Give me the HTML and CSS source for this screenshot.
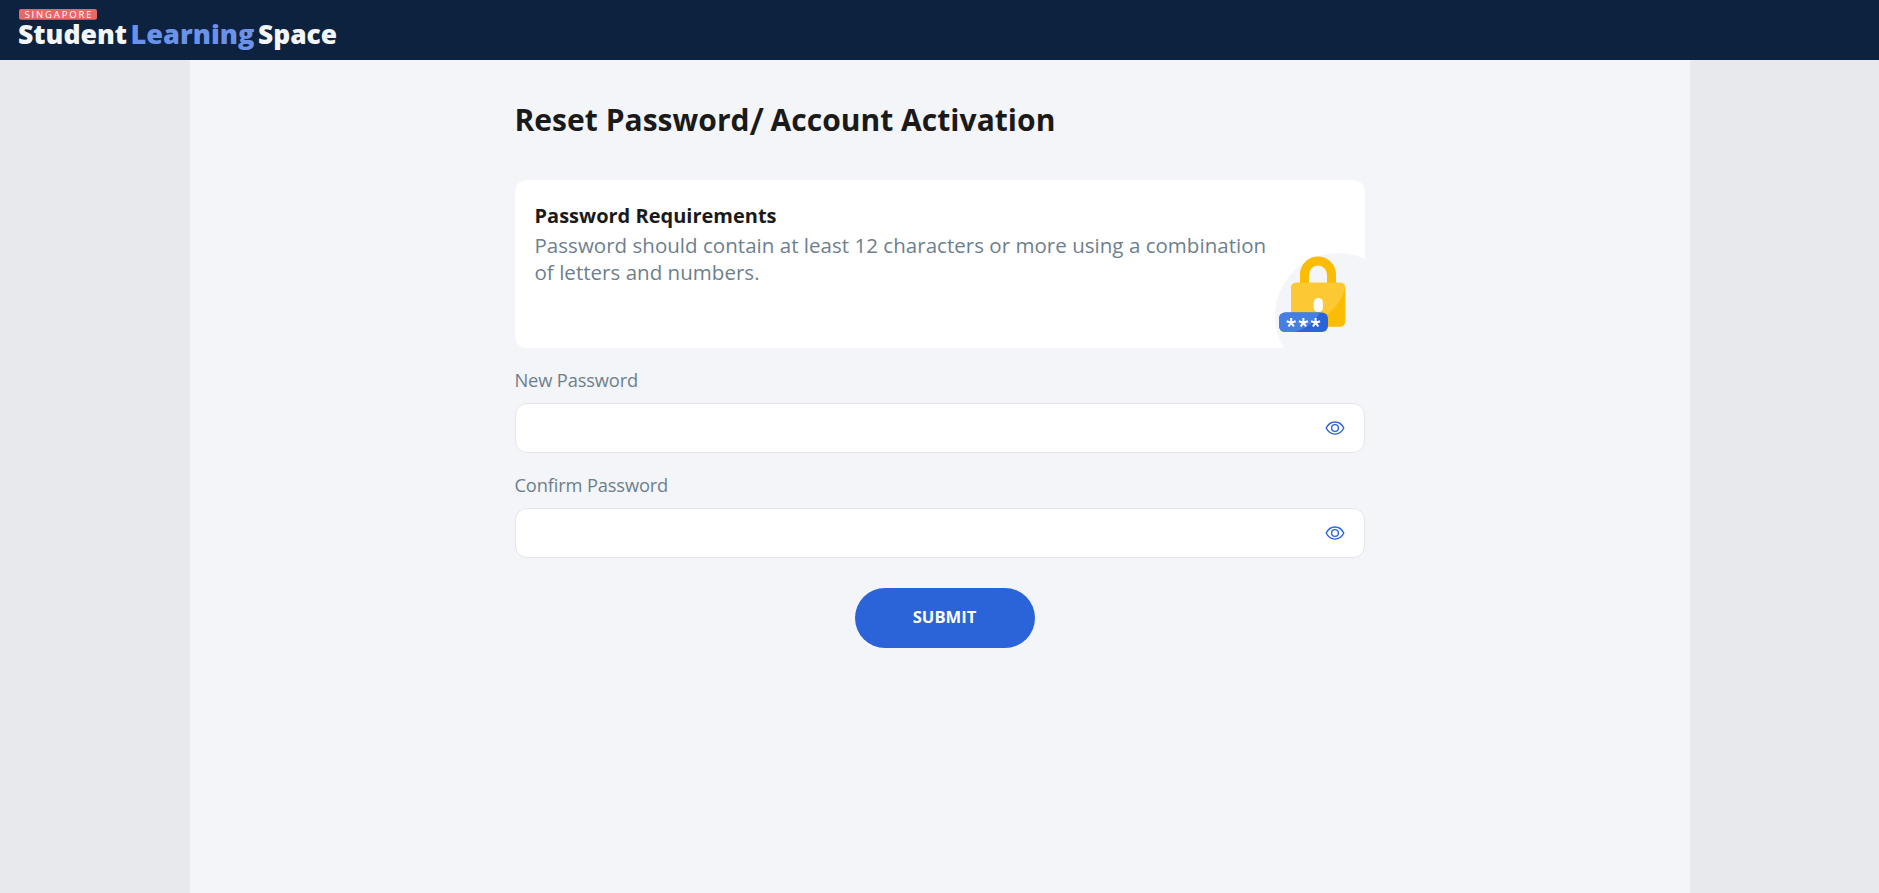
FILE: index.html
```html
<!DOCTYPE html>
<html lang="en">
<head>
<meta charset="utf-8">
<title>Reset Password</title>
<link rel="stylesheet" href="styles.css">
</head>
<body>
<header class="topbar">
  <svg class="logo" width="322" height="46" viewBox="0 0 322 46">
    <rect class="logo-tag" x="1" y="1" width="78" height="10.800" rx="2"/>
    <text class="logo-country" x="6.5" y="9.7" textLength="67">SINGAPORE</text>
    <text class="logo-word" x="0" y="35.5" textLength="109" lengthAdjust="spacingAndGlyphs">Student</text>
    <text class="logo-word logo-accent" x="112.5" y="35.5" textLength="124" lengthAdjust="spacingAndGlyphs">Learning</text>
    <text class="logo-word" x="240" y="35.5" textLength="79" lengthAdjust="spacingAndGlyphs">Space</text>
  </svg>
</header>
<main class="page">
  <form class="content">
    <h1 class="title">Reset Password<span class="slash">/</span> Account Activation</h1>
    <section class="card">
      <div class="card-text">
        <h2 class="card-title">Password Requirements</h2>
        <p class="card-body">Password should contain at least 12 characters or more using a combination of letters and numbers.</p>
      </div>
      <svg class="lock" width="90" height="98" viewBox="0 0 90 98">
        <circle class="halo" cx="63" cy="66" r="63"/>
        <path class="shackle" d="M29.500 34V24.500a13.500 13.500 0 0 1 27 0V34"/>
        <rect class="lock-dark" x="16" y="32.800" width="54.300" height="44" rx="5"/>
        <path class="lock-light" d="M21 32.800H65a5 5 0 0 1 5 4.500C67 54 52 68 32 76.800H21a5 5 0 0 1-5-5V37.800a5 5 0 0 1 5-5z"/>
        <rect class="keyhole" x="38.700" y="48" width="9.200" height="14" rx="4.600"/>
        <rect class="pin-dark" x="4" y="62.500" width="49" height="19.500" rx="6"/>
        <path class="pin-light" d="M10 62.500H45C40 72 31 79 19 82H10a6 6 0 0 1-6-6V68.500a6 6 0 0 1 6-6z"/>
        <path class="stars" d="M16.200 72.700v-4.800m0 4.800l4.500-1.400m-4.500 1.400l2.700 3.800m-2.700-3.800l-2.700 3.800m2.700-3.800l-4.500-1.400M28.400 72.700v-4.800m0 4.800l4.500-1.400m-4.500 1.400l2.700 3.800m-2.700-3.800l-2.700 3.800m2.700-3.800l-4.500-1.400M40.600 72.700v-4.800m0 4.800l4.500-1.400m-4.500 1.400l2.700 3.800m-2.700-3.800l-2.700 3.800m2.700-3.800l-4.500-1.400"/>
      </svg>
    </section>
    <div class="field">
      <label class="label" for="new">New Password</label>
      <div class="box">
        <input class="input" id="new" type="password">
        <svg class="eye" width="20" height="16" viewBox="0 0 20 16"><path d="M1.200 8C5.200 -.1 14.800 -.1 18.800 8C14.800 16.100 5.200 16.100 1.200 8z"/><circle cx="10" cy="8" r="3.400"/></svg>
      </div>
    </div>
    <div class="field">
      <label class="label" for="confirm">Confirm Password</label>
      <div class="box">
        <input class="input" id="confirm" type="password">
        <svg class="eye" width="20" height="16" viewBox="0 0 20 16"><path d="M1.200 8C5.200 -.1 14.800 -.1 18.800 8C14.800 16.100 5.200 16.100 1.200 8z"/><circle cx="10" cy="8" r="3.400"/></svg>
      </div>
    </div>
    <button class="submit" type="button">SUBMIT</button>
  </form>
</main>
</body>
</html>
```
FILE: styles.css
```css
* { box-sizing: border-box; }
body {
  margin: 0;
  min-height: 100vh;
  display: flex;
  flex-direction: column;
  background: #e7e9ed;
  font-family: "Open Sans", sans-serif;
  color: #1a1a1a;
}
.topbar { height: 60px; padding: 8px 18px; background: #0c223f; }
.logo { display: block; }
.logo-tag { fill: #e86868; }
.logo-country { fill: #fff; font-size: 9.5px; }
.logo-word { fill: #f3f5f9; font-size: 27px; font-weight: 800; }
.logo-accent { fill: #6a92e8; }
.page {
  width: 1500px;
  flex: 1;
  margin: 0 auto;
  background: #f3f5f9;
}
.content { width: 850px; margin: 0 auto; padding-top: 39px; display: flex; flex-direction: column; }
.title { height: 42px; margin: 0 0 39px; font-size: 30px; line-height: 42px; font-weight: 700; letter-spacing: .03px; }
.slash { font-size: 37px; font-weight: 600; line-height: 1px; letter-spacing: -1.3px; vertical-align: -4px; }
.card {
  height: 168px;
  display: flex;
  align-items: flex-end;
  justify-content: space-between;
  background: #fff;
  border-radius: 12px 12px 0 12px;
  overflow: hidden;
}
.card-text { align-self: flex-start; width: 758px; padding: 21px 0 0 20px; }
.card-title { margin: 0 0 1px; font-size: 20px; line-height: 30px; font-weight: 700; letter-spacing: 0; }
.card-body { margin: 0; font-size: 20.5px; line-height: 27px; letter-spacing: .03px; color: #6d7f8d; }
.lock { flex: none; }
.halo { fill: #f3f5f9; }
.shackle { fill: none; stroke: #fbbc05; stroke-width: 9; }
.lock-dark { fill: #fbbc05; }
.lock-light { fill: #fcc934; }
.keyhole { fill: #fff; }
.pin-dark { fill: #2b63d9; }
.pin-light { fill: #457fe2; }
.stars { fill: none; stroke: #fff; stroke-width: 2; }
.field { display: flex; flex-direction: column; }
.label { margin: 20px 0 11px; font-size: 18.3px; line-height: 24px; letter-spacing: -.15px; color: #6d7f8d; }
.box {
  height: 50px;
  display: flex;
  align-items: center;
  padding: 0 19px 0 15px;
  background: #fff;
  border: 1px solid #e4e6eb;
  border-radius: 12px;
}
.input { flex: 1; border: 0; outline: 0; background: none; font: inherit; }
.eye { fill: none; stroke: #2b63d9; stroke-width: 1.4; }
.submit {
  align-self: center;
  width: 180px;
  height: 60px;
  margin: 30px 0 0 10px;
  padding: 0 0 2px;
  border: 0;
  border-radius: 30px;
  background: #2b63d9;
  color: #fff;
  font: 700 16.6px/24px "Open Sans", sans-serif;
}
```
